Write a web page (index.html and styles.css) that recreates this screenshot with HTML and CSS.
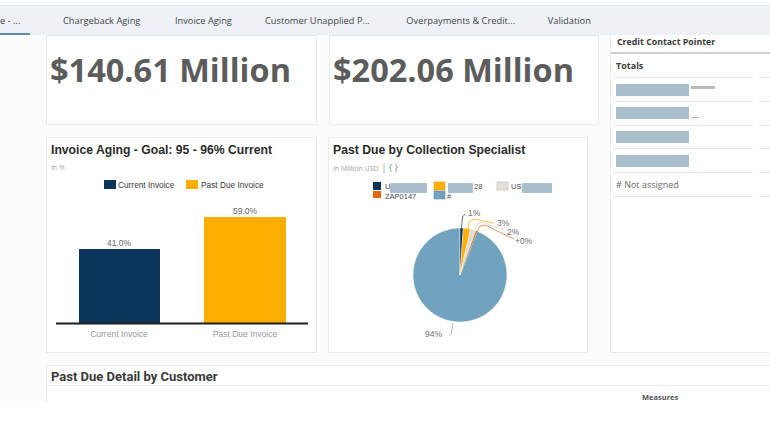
FILE: index.html
```html
<!DOCTYPE html>
<html>
<head>
<meta charset="utf-8">
<link rel="stylesheet" href="styles.css">
</head>
<body>
<div class="page">
  <div class="topstrip"></div>
  <nav class="tabbar">
    <div class="tab active">e - ...</div>
    <div class="tab">Chargeback Aging</div>
    <div class="tab">Invoice Aging</div>
    <div class="tab">Customer Unapplied P...</div>
    <div class="tab">Overpayments &amp; Credit...</div>
    <div class="tab">Validation</div>
  </nav>
  <main class="main">
    <div class="leftcol">
      <div class="row row1">
        <section class="card kpi kpi1"><div class="kpi-value">$140.61 Million</div></section>
        <section class="card kpi kpi2"><div class="kpi-value">$202.06 Million</div></section>
      </div>
      <div class="row row2">
        <section class="card chart chart1">
          <h2 class="chart-title">Invoice Aging - Goal: 95 - 96% Current</h2>
          <div class="chart-sub">in %</div>
          <svg class="chart-svg" width="269" height="180" viewBox="0 0 269 180">
            <rect x="57" y="7" width="12" height="9" fill="#0c3659"/>
            <text x="71" y="15" class="lg">Current Invoice</text>
            <rect x="139" y="7" width="12" height="9" fill="#fdac00"/>
            <text x="154" y="15" class="lg">Past Due Invoice</text>
            <rect x="32" y="76" width="81" height="74" fill="#0c3659"/>
            <rect x="157" y="44" width="82" height="106" fill="#fdac00"/>
            <text x="72" y="73" class="val" text-anchor="middle">41.0%</text>
            <text x="198" y="41" class="val" text-anchor="middle">59.0%</text>
            <line x1="9" y1="150.5" x2="261" y2="150.5" stroke="#1f1f1f" stroke-width="2"/>
            <text x="72" y="164" class="cat" text-anchor="middle">Current Invoice</text>
            <text x="198" y="164" class="cat" text-anchor="middle">Past Due Invoice</text>
          </svg>
        </section>
        <section class="card chart chart2">
          <h2 class="chart-title">Past Due by Collection Specialist</h2>
          <div class="chart-sub">in Million USD <span class="sub-icons">| { }</span></div>
          <svg class="chart-svg" width="258" height="180" viewBox="0 0 258 180">
            <rect x="44" y="8" width="8" height="8" fill="#0c3659"/>
            <text x="56" y="14.5" class="lg2">U</text>
            <rect x="44" y="17" width="8" height="7" fill="#e8640f"/>
            <text x="56" y="24.5" class="lg2">ZAP0147</text>
            <rect x="61" y="9" width="37" height="10" fill="#a9c0cc"/>
            <rect x="105" y="8" width="11" height="8" fill="#fdb000" stroke="#e79e00" stroke-width="0.6"/>
            <rect x="119" y="9" width="25" height="10" fill="#a9c0cc"/>
            <text x="145" y="14.5" class="lg2">28</text>
            <rect x="105" y="17" width="11" height="8" fill="#73a3be" stroke="#5f8fab" stroke-width="0.6"/>
            <text x="118" y="24.5" class="lg2">#</text>
            <rect x="168" y="8" width="11" height="8" fill="#e2e0da" stroke="#b9b7b0" stroke-width="0.6"/>
            <text x="182" y="14.5" class="lg2">US</text>
            <rect x="193" y="9" width="30" height="10" fill="#a9c0cc"/>

            <path d="M131,101 L148.22,57.27 A47,47 0 1 1 131,54 Z" fill="#72a3be" stroke="#fff" stroke-width="0.5"/>
            <path d="M131,101 L131,54 A47,47 0 0 1 134.28,54.11 Z" fill="#0c3659" stroke="#fff" stroke-width="0.4"/>
            <path d="M131,101 L134.28,54.11 A47,47 0 0 1 141.57,55.2 Z" fill="#fdb000" stroke="#fff" stroke-width="0.4"/>
            <path d="M131,101 L141.57,55.2 A47,47 0 0 1 147.07,56.83 Z" fill="#dedcd5" stroke="#fff" stroke-width="0.4"/>
            <path d="M131,101 L147.07,56.83 A47,47 0 0 1 148.22,57.27 Z" fill="#e8640f"/>

            <polyline points="132.5,54 133.5,43 136,40" fill="none" stroke="#2d4f6b" stroke-width="0.8"/>
            <polyline points="139,55 140,48 144,45 165,49" fill="none" stroke="#f2b21a" stroke-width="0.8"/>
            <polyline points="146,57 148,50 153,48 175,56" fill="none" stroke="#d6d4ce" stroke-width="0.8"/>
            <polyline points="148,58 151,52 156,51 185,65" fill="none" stroke="#e27a35" stroke-width="0.8"/>
            <polyline points="120,162 122,160 124,149" fill="none" stroke="#9aaab4" stroke-width="0.8"/>
            <text x="139" y="42" class="pl">1%</text>
            <text x="168" y="52" class="pl">3%</text>
            <text x="178" y="61" class="pl">2%</text>
            <text x="186" y="70" class="pl">+0%</text>
            <text x="96" y="163" class="pl">94%</text>
          </svg>
        </section>
      </div>
    </div>
    <aside class="card panel">
      <div class="panel-head">Credit Contact Pointer</div>
      <div class="ptable">
        <div class="prow totals"><div class="pc">Totals</div><div class="pc2"></div></div>
        <div class="prow"><div class="pc"><span class="redact"></span><span class="ghost g1"></span></div><div class="pc2"></div></div>
        <div class="prow"><div class="pc"><span class="redact"></span><span class="ghost g2"></span></div><div class="pc2"></div></div>
        <div class="prow"><div class="pc"><span class="redact"></span></div><div class="pc2"></div></div>
        <div class="prow"><div class="pc"><span class="redact"></span></div><div class="pc2"></div></div>
        <div class="prow"><div class="pc na"># Not assigned</div><div class="pc2"></div></div>
      </div>
    </aside>
  </main>
  <section class="card detail">
    <h2 class="detail-title">Past Due Detail by Customer</h2>
    <div class="detail-body">Measures</div>
  </section>
</div>
</body>
</html>
```
FILE: styles.css
```css
html, body {
  margin: 0;
  padding: 0;
  background: #ffffff;
  overflow: hidden;
}
body {
  width: 770px;
  height: 433px;
  font-family: "Open Sans", "Noto Sans", sans-serif;
  color: #32363a;
}
.page {
  height: 402px;
  overflow: hidden;
  background: #fcfcfc;
}
.topstrip {
  height: 5px;
  background: #ffffff;
  border-bottom: 1px solid #e6e9ee;
}
.tabbar {
  height: 29px;
  background: #eef2f7;
  display: flex;
  align-items: stretch;
  padding-left: 0;
  white-space: nowrap;
}
.tab {
  font-size: 9.3px;
  line-height: 29px;
  color: #3f4448;
  box-sizing: border-box;
  height: 29px;
}
.tab.active {
  width: 30px;
  border-bottom: 2px solid #5d8bb4;
  color: #3f4448;
}
.tab:nth-child(2) { margin-left: 33px; }
.tab:nth-child(3) { margin-left: 34.5px; }
.tab:nth-child(4) { margin-left: 33px; }
.tab:nth-child(5) { margin-left: 36.5px; }
.tab:nth-child(6) { margin-left: 32.5px; }
.main {
  display: flex;
  gap: 11px;
  padding-left: 46px;
  width: 900px;
}
.leftcol {
  width: 553px;
  display: flex;
  flex-direction: column;
  gap: 12px;
}
.row {
  display: flex;
  gap: 11px;
}
.row1 { gap: 12px; }
.card {
  background: #ffffff;
  border: 1px solid #ebebeb;
  box-sizing: border-box;
}
.kpi {
  height: 90px;
  border-top-color: #e3e6ea;
}
.kpi1 { width: 271px; }
.kpi2 { width: 270px; }
.kpi-value {
  font-family: "Open Sans", sans-serif;
  font-weight: 700;
  font-size: 32.5px;
  color: #5c5c5c;
  padding: 12px 0 0 3px;
  line-height: 44px;
  white-space: nowrap;
}
.chart {
  height: 216px;
  overflow: hidden;
}
.chart1 { width: 271px; }
.chart2 { width: 260px; }
.chart-title {
  margin: 0;
  padding: 5px 0 0 4px;
  font-family: "Liberation Sans", Arial, sans-serif;
  font-weight: 700;
  font-size: 12.2px;
  line-height: 15px;
  color: #2b2b2b;
  white-space: nowrap;
}
.chart-sub {
  margin-top: 5px;
  padding-left: 4px;
  font-family: "Open Sans", sans-serif;
  font-size: 7px;
  line-height: 10px;
  color: #a2a2a2;
}
.sub-icons {
  font-size: 9px;
  color: #8a8a8a;
  margin-left: 1px;
}
.chart-svg {
  display: block;
}
.lg {
  font-family: "Liberation Sans", Arial, sans-serif;
  font-size: 8.3px;
  fill: #3a3a3a;
}
.lg2 {
  font-family: "Liberation Sans", Arial, sans-serif;
  font-size: 7.5px;
  fill: #4a4a4a;
}
.val {
  font-family: "Liberation Sans", Arial, sans-serif;
  font-size: 8.5px;
  fill: #666;
}
.cat {
  font-family: "Liberation Sans", Arial, sans-serif;
  font-size: 8.5px;
  fill: #9a9a9a;
}
.pl {
  font-family: "Liberation Sans", Arial, sans-serif;
  font-size: 8.5px;
  fill: #6e6e6e;
}
.panel {
  width: 220px;
  height: 318px;
  padding: 0 2px;
  border-top: none;
}
.panel-head {
  font-size: 8.8px;
  font-weight: 700;
  color: #3b3b3b;
  height: 17px;
  line-height: 14px;
  border-bottom: 2px solid #cfcfcf;
  margin: 0 -2px;
  padding-left: 6px;
}
.ptable {
  display: flex;
  flex-direction: column;
}
.prow {
  display: flex;
  gap: 6px;
  height: 24px;
}
.pc {
  width: 140px;
  border-bottom: 1px solid #e8e8e8;
  box-sizing: border-box;
  display: flex;
  align-items: center;
  padding-left: 3px;
  font-size: 9px;
  color: #555;
}
.pc2 {
  flex: 1;
  border-bottom: 1px solid #e8e8e8;
}
.totals .pc {
  font-weight: 700;
  color: #3b3b3b;
  align-items: flex-start;
  padding-top: 5px;
}
.prow:nth-child(3), .prow:nth-child(4) { height: 23.5px; }
.redact {
  display: inline-block;
  width: 73px;
  height: 12px;
  background: #a9c0cc;
}
.ghost {
  display: inline-block;
  height: 3px;
  background: #b9b9b9;
  margin-left: 2px;
  align-self: flex-start;
}
.g1 { width: 24px; margin-top: 8px; }
.g2 { width: 8px; height: 1px; margin-top: 15px; }
.na {
  color: #6a6a6a;
  font-size: 9px;
}
.detail {
  margin: 12px 0 0 46px;
  width: 760px;
  height: 60px;
}
.detail-title {
  margin: 0;
  padding: 3px 0 0 4px;
  height: 20px;
  box-sizing: border-box;
  font-family: "Roboto", "Liberation Sans", sans-serif;
  font-weight: 700;
  font-size: 13px;
  line-height: 16px;
  color: #3a3a3a;
  border-bottom: 1px solid #ededed;
}
.detail-body {
  padding-left: 595px;
  padding-top: 6px;
  font-size: 7.5px;
  line-height: 10px;
  height: 10px;
  font-weight: 700;
  color: #555;
}
```
